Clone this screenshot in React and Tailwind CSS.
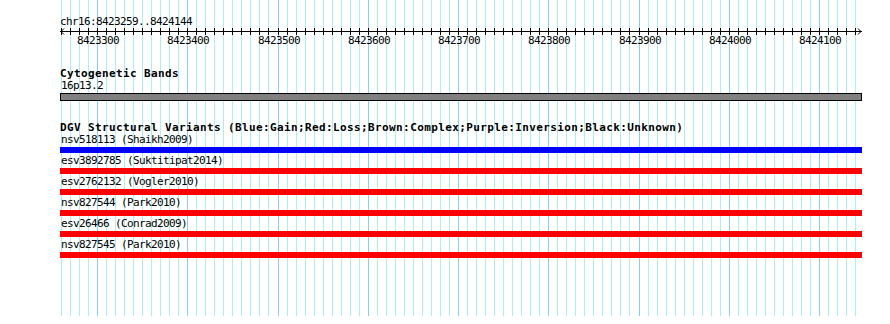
import React from "react";

const START = 8423259;
const X0 = 60;
const PX = 0.9025;
const xOf = (bp) => Math.round(X0 + (bp - START) * PX) + 0.5;

const ticks = [];
for (let bp = 8423260; bp <= 8424140; bp += 10) ticks.push(bp);

const variants = [
  { name: "nsv518113 (Shaikh2009)", color: "bg-[#0000ff]" },
  { name: "esv3892785 (Suktitipat2014)", color: "bg-[#ff0000]" },
  { name: "esv2762132 (Vogler2010)", color: "bg-[#ff0000]" },
  { name: "nsv827544 (Park2010)", color: "bg-[#ff0000]" },
  { name: "esv26466 (Conrad2009)", color: "bg-[#ff0000]" },
  { name: "nsv827545 (Park2010)", color: "bg-[#ff0000]" },
];

const mono = "font-['DejaVu_Sans_Mono',monospace]";

const Grid = () => (
  <svg className="absolute left-0 top-0" width="890" height="316">
    {ticks.map((bp) => (
      <line
        key={bp}
        x1={xOf(bp)}
        x2={xOf(bp)}
        y1="0"
        y2="316"
        stroke={bp % 100 === 0 ? "#87cefa" : "#afeeee"}
        strokeWidth="1"
      />
    ))}
  </svg>
);

const Ruler = () => (
  <svg width="890" height="50" className="block">
    <text
      x="60"
      y="25"
      fontFamily="DejaVu Sans Mono, monospace"
      fontSize="11"
      letterSpacing="-0.62"
      fill="#000"
    >
      chr16:8423259..8424144
    </text>
    <line x1="60" x2="862" y1="31.5" y2="31.5" stroke="#000" />
    <polyline points="64,28.5 61,31.5 64,34.5" fill="none" stroke="#000" />
    <polyline points="858,28.5 861,31.5 858,34.5" fill="none" stroke="#000" />
    {ticks.map((bp) => (
      <line
        key={bp}
        x1={xOf(bp)}
        x2={xOf(bp)}
        y1="28"
        y2="35"
        stroke="#000"
      />
    ))}
    {ticks
      .filter((bp) => bp % 100 === 0)
      .map((bp) => (
        <text
          key={bp}
          x={xOf(bp) - 20.5}
          y="44"
          fontFamily="DejaVu Sans Mono, monospace"
          fontSize="11"
          letterSpacing="-0.62"
          fill="#000"
        >
          {bp}
        </text>
      ))}
  </svg>
);

const TrackTitle = ({ children }) => (
  <div
    className={`${mono} pl-[60px] text-[11px] font-bold leading-[13px] tracking-[0.38px] text-black whitespace-nowrap`}
  >
    {children}
  </div>
);

const Label = ({ children }) => (
  <div
    className={`${mono} pl-[61px] text-[11px] leading-[12px] tracking-[-0.62px] text-black whitespace-nowrap`}
  >
    {children}
  </div>
);

export default function App() {
  return (
    <div className="relative w-[890px] h-[324px] bg-white overflow-hidden">
      <Grid />
      <div className="relative">
        <Ruler />

        {/* Cytogenetic bands */}
        <div className="mt-[17px]">
          <TrackTitle>Cytogenetic Bands</TrackTitle>
          <Label>16p13.2</Label>
          <div className="ml-[60px] mt-px w-[802px] h-[8px] bg-[#808080] border border-black" />
        </div>

        {/* DGV */}
        <div className="mt-[20px]">
          <TrackTitle>
            DGV Structural Variants
            (Blue:Gain;Red:Loss;Brown:Complex;Purple:Inversion;Black:Unknown)
          </TrackTitle>
          <div className="flex flex-col gap-[2px]">
            {variants.map((v) => (
              <div key={v.name}>
                <Label>{v.name}</Label>
                <div className={`ml-[60px] mt-px w-[802px] h-[6px] ${v.color}`} />
              </div>
            ))}
          </div>
        </div>
      </div>
    </div>
  );
}
